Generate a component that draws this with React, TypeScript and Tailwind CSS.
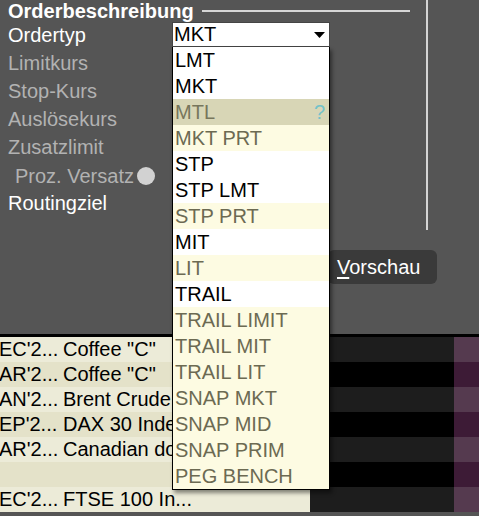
import React from 'react';

const orderTypes: { label: string; tone: 'white' | 'cream' | 'active' }[] = [
  { label: 'LMT', tone: 'white' },
  { label: 'MKT', tone: 'white' },
  { label: 'MTL', tone: 'active' },
  { label: 'MKT PRT', tone: 'cream' },
  { label: 'STP', tone: 'white' },
  { label: 'STP LMT', tone: 'white' },
  { label: 'STP PRT', tone: 'cream' },
  { label: 'MIT', tone: 'white' },
  { label: 'LIT', tone: 'cream' },
  { label: 'TRAIL', tone: 'white' },
  { label: 'TRAIL LIMIT', tone: 'cream' },
  { label: 'TRAIL MIT', tone: 'cream' },
  { label: 'TRAIL LIT', tone: 'cream' },
  { label: 'SNAP MKT', tone: 'cream' },
  { label: 'SNAP MID', tone: 'cream' },
  { label: 'SNAP PRIM', tone: 'cream' },
  { label: 'PEG BENCH', tone: 'cream' },
];

// names are cut where the open list covers the table
const rows = [
  { expiry: "EC'2...", name: 'Coffee "C"' },
  { expiry: "AR'2...", name: 'Coffee "C"' },
  { expiry: "AN'2...", name: 'Brent Crude' },
  { expiry: "EP'2...", name: 'DAX 30 Inde' },
  { expiry: "AR'2...", name: 'Canadian do' },
  { expiry: '', name: '' },
  { expiry: "EC'2...", name: 'FTSE 100 In...' },
];

function OrderTypeList() {
  return (
    <div className="absolute left-[172px] top-[47px] w-[158px] border-x border-b border-black shadow-[2px_3px_4px_rgba(0,0,0,0.45)]">
      {orderTypes.map((t) => (
        <div
          key={t.label}
          className={
            'flex h-[26px] items-center justify-between pl-[2px] pr-[4px] leading-[26px] ' +
            (t.tone === 'white'
              ? 'bg-white text-black'
              : t.tone === 'active'
              ? 'bg-[#d8d6b6] text-[#77765c]'
              : 'bg-[#fdfbe2] text-[#6c6a52]')
          }
        >
          <span>{t.label}</span>
          {t.tone === 'active' && <span className="text-[#73c2c9]">?</span>}
        </div>
      ))}
    </div>
  );
}

export default function App() {
  return (
    <div className="relative h-[516px] w-[479px] overflow-hidden bg-[#555555] font-['Liberation_Sans',Arial,sans-serif] text-[20px]">
      {/* Order panel */}
      <div className="h-[334px]">
        <div className="h-[230px] w-[428px] border-r-2 border-[#d4d4d4]">
          <div className="flex h-[22px] items-center pl-2 pr-[16px]">
            <span className="font-bold leading-[22px] text-white">Orderbeschreibung</span>
            <div className="ml-[8px] h-[1.5px] flex-1 bg-[#d6d6d6]" />
          </div>

          <div className="flex h-[28px] pl-2">
            <span className="w-[164px] leading-[27px] text-white">Ordertyp</span>
            <div className="flex h-[25px] w-[158px] items-center justify-between border border-[#444] bg-white pl-[1px] pr-[4px] leading-[25px] text-black">
              <span>MKT</span>
              <svg width="11" height="6" viewBox="0 0 11 6">
                <path d="M0 0h11L5.5 6z" fill="#000" />
              </svg>
            </div>
          </div>
          <div className="h-[28px] pl-2 leading-[27px] text-[#b2b2b2]">Limitkurs</div>
          <div className="h-[28px] pl-2 leading-[27px] text-[#b2b2b2]">Stop-Kurs</div>
          <div className="h-[28px] pl-2 leading-[27px] text-[#b2b2b2]">Auslösekurs</div>
          <div className="h-[28px] pl-2 leading-[27px] text-[#b2b2b2]">Zusatzlimit</div>
          <div className="flex h-[28px] items-center pl-[15px] text-[#b2b2b2]">
            <span className="leading-[27px]">Proz. Versatz</span>
            <span className="ml-[3px] h-[18px] w-[18px] rounded-full bg-[#d2d2d2]" />
          </div>
          <div className="h-[28px] pl-2 leading-[27px] text-white">Routingziel</div>
        </div>

        <button className="ml-[328px] mt-[20px] h-[34px] w-[109px] rounded-md bg-[#3a3a3a] pl-[9px] text-left leading-[34px] text-white">
          <span className="underline underline-offset-[3px]">V</span>orschau
        </button>
      </div>

      <div className="h-[3px] bg-black" />

      {/* Contract table */}
      <div>
        {rows.map((r, i) => (
          <div key={i} className="flex h-[25px]">
            <div
              className={
                'flex w-[310px] overflow-hidden whitespace-nowrap leading-[25px] text-black ' +
                (i % 2 === 0 ? 'bg-[#ecebd8]' : 'bg-[#e4e2c9]')
              }
            >
              <span className="-ml-[1px] w-[64px] shrink-0">{r.expiry}</span>
              <span>{r.name}</span>
            </div>
            <div className={'w-[144px] ' + (i % 2 === 0 ? 'bg-[#1d1d1d]' : 'bg-black')} />
            <div className={'flex-1 ' + (i % 2 === 0 ? 'bg-[#553a4f]' : 'bg-[#3d1b36]')} />
          </div>
        ))}
      </div>

      <OrderTypeList />
    </div>
  );
}
